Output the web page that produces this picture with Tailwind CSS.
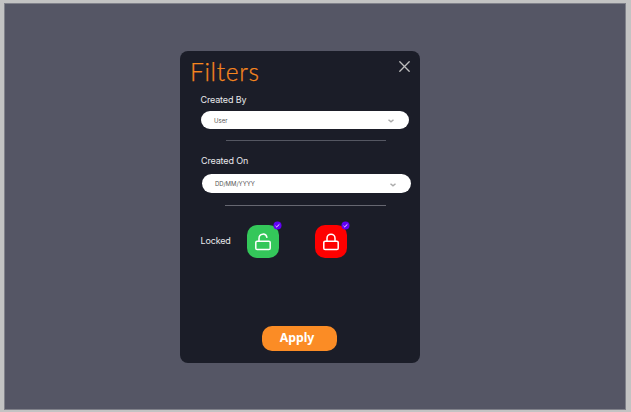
<!DOCTYPE html>
<html lang="en">
<head>
<meta charset="utf-8">
<title>Filters</title>
<script src="https://cdn.jsdelivr.net/npm/@tailwindcss/browser@4"></script>
</head>
<body class="h-[412px] w-[631px] overflow-hidden bg-[#c3c3c3] pt-[3px] pl-[4px] font-['Inter',sans-serif]">
<main class="h-[407px] w-[622px] border border-[#80818a] bg-[#555665] pt-[47px] pl-[175px]">
  <section class="flex h-[312px] w-[240px] flex-col rounded-[8px] bg-[#1b1d28] text-[#e9e9ec]">
    <header class="flex h-[42px] justify-between pt-[2px] pr-[10px] pl-[10px]">
      <h1 class="mt-[1px] font-['Lato',sans-serif] text-[24.5px] leading-[36px] font-light tracking-[0.7px] text-[#f6861f] [-webkit-text-stroke:0.25px_#f6861f]">Filters</h1>
      <svg class="mt-[8px] h-[11px] w-[11px]" viewBox="0 0 11 11" fill="none" stroke="#bdbdbd" stroke-width="1.3" stroke-linecap="round"><path d="M.8.8l9.4 9.4M10.2.8L.8 10.2"/></svg>
    </header>
    <label class="pl-[20.5px] text-[9px] leading-[14px] tracking-[-0.15px]">Created By</label>
    <div class="mt-[4px] ml-[20.5px] flex h-[18px] w-[208.5px] items-center justify-between rounded-full bg-white pr-[15px] pl-[13.5px] text-[6px] text-[#555]">
      <span>User</span>
      <svg class="mt-[2px] h-[4px] w-[6px]" viewBox="0 0 6 4" fill="none" stroke="#aaa" stroke-width="1.4"><path d="M.5.7L3 2.9 5.5.7"/></svg>
    </div>
    <div class="mt-[11px] ml-[46px] h-px w-[160px] bg-[#555762]"></div>
    <label class="mt-[13px] pl-[21px] text-[9px] leading-[14px] tracking-[-0.15px]">Created On</label>
    <div class="mt-[6px] ml-[22px] flex h-[19px] w-[209px] items-center justify-between rounded-full bg-white pr-[15px] pl-[13px] text-[6px] text-[#555]">
      <span>DD/MM/YYYY</span>
      <svg class="mt-[2px] h-[4px] w-[6px]" viewBox="0 0 6 4" fill="none" stroke="#aaa" stroke-width="1.4"><path d="M.5.7L3 2.9 5.5.7"/></svg>
    </div>
    <div class="mt-[12px] ml-[45px] h-px w-[161px] bg-[#666771]"></div>
    <div class="mt-[19px] flex h-[33px] items-center pl-[20.5px]">
      <span class="-mt-[2px] w-[46.5px] text-[9px] leading-[14px] tracking-[-0.15px]">Locked</span>
      <button class="relative flex h-[33px] w-[32px] items-center justify-center rounded-[10px] bg-[#34c75a]">
        <svg class="h-[18px] w-[16px]" viewBox="0 0 16 18" fill="none" stroke="#fff" stroke-width="1.5" stroke-linecap="round"><rect x=".8" y="8.2" width="14.4" height="8.3" rx="1.3"/><path d="M4 8.2V5.4C4 0 11.1-.2 11.9 4.3"/></svg>
        <svg class="absolute -top-[4px] left-[26px] h-[9px] w-[9px]" viewBox="0 0 9 9" fill="none"><circle cx="4.5" cy="4.5" r="4" fill="#6200f5"/><path d="M2.6 4.9l1.1 1 2.7-2.6" stroke="#fff" stroke-width=".9"/></svg>
      </button>
      <button class="relative ml-[36px] flex h-[33px] w-[32px] items-center justify-center rounded-[10px] bg-[#fe0000]">
        <svg class="h-[18px] w-[16px]" viewBox="0 0 16 18" fill="none" stroke="#fff" stroke-width="1.5"><rect x=".8" y="8.2" width="14.4" height="8.3" rx="1.3"/><path d="M4 8.2V5.2a4 4 0 0 1 8 0v3"/></svg>
        <svg class="absolute -top-[4px] left-[26px] h-[9px] w-[9px]" viewBox="0 0 9 9" fill="none"><circle cx="4.5" cy="4.5" r="4" fill="#6200f5"/><path d="M2.6 4.9l1.1 1 2.7-2.6" stroke="#fff" stroke-width=".9"/></svg>
      </button>
    </div>
    <button class="mt-[68px] ml-[82px] h-[25px] w-[75px] rounded-[10px] bg-[#fb8c25] pr-[5px] pb-[1px] font-['Noto_Sans',sans-serif] text-[12.3px] leading-[24px] font-bold text-white">Apply</button>
  </section>
</main>
</body>
</html>
